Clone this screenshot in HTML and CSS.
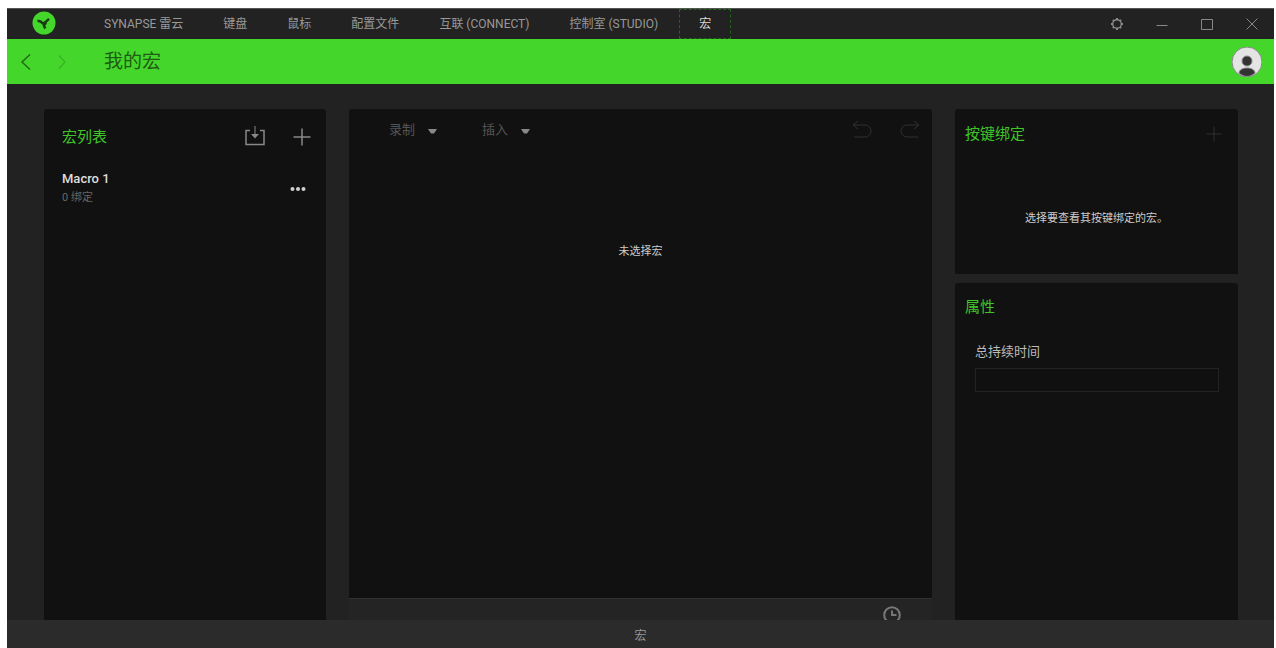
FILE: index.html
```html
<!DOCTYPE html>
<html lang="zh-CN">
<head>
<meta charset="utf-8">
<title>我的宏</title>
<link rel="stylesheet" href="styles.css">
</head>
<body>
<div class="window">
  <header class="titlebar">
    <svg class="logo" viewBox="0 0 24 24" aria-hidden="true">
      <circle cx="12" cy="12" r="11.5" fill="#45d62c"/>
      <path d="M5.500 9.800c2.500 0 4 1 6 3l5.500-5M11.500 12.500c.3 2 .6 3.200 1.800 5" fill="none" stroke="#173b12" stroke-width="2.400"/>
      <path d="M9 11.500l4.500-1 1.500 2-2.500 3z" fill="#173b12"/>
    </svg>
    <nav class="tabs">
      <a class="tab" href="#synapse">SYNAPSE 雷云</a>
      <a class="tab" href="#keyboard">键盘</a>
      <a class="tab" href="#mouse">鼠标</a>
      <a class="tab" href="#profiles">配置文件</a>
      <a class="tab" href="#connect">互联 (CONNECT)</a>
      <a class="tab" href="#studio">控制室 (STUDIO)</a>
      <a class="tab tab-active" href="#macro" aria-current="page">宏</a>
    </nav>
    <div class="controls">
      <button class="icon-button" aria-label="设置">
        <svg class="icon-small" viewBox="0 0 16 16"><circle cx="8" cy="8" r="4.300" stroke-width="1.400"/><path d="M8 2v2M8 12v2M2 8h2M12 8h2M3.900 3.900l1.200 1.200M10.900 10.900l1.200 1.200M12.100 3.900l-1.200 1.200M5.100 10.900l-1.200 1.200" stroke-width="2"/></svg>
      </button>
      <button class="icon-button" aria-label="最小化">
        <svg class="icon-small" viewBox="0 0 16 16"><path d="M2.500 9.500h11"/></svg>
      </button>
      <button class="icon-button" aria-label="最大化">
        <svg class="icon-small" viewBox="0 0 16 16"><path d="M2.500 3.500h11v10h-11z"/></svg>
      </button>
      <button class="icon-button" aria-label="关闭">
        <svg class="icon-small" viewBox="0 0 16 16"><path d="M2.500 2.500l11 11M13.500 2.500l-11 11"/></svg>
      </button>
    </div>
  </header>

  <div class="banner">
    <button class="icon-button" aria-label="后退">
      <svg class="icon-arrow" viewBox="0 0 16 20"><path d="M12 2.500L4 10l8 7.500" stroke="#1d6b12" stroke-width="1.500"/></svg>
    </button>
    <button class="icon-button" aria-label="前进">
      <svg class="icon-arrow" viewBox="0 0 16 20"><path d="M5 3.500l6 6.500-6 6.500" stroke="#37b423" stroke-width="1.300"/></svg>
    </button>
    <h1 class="page-title">我的宏</h1>
    <button class="icon-button avatar" aria-label="用户">
      <svg class="avatar-icon" viewBox="0 0 30 30">
        <circle cx="15" cy="15" r="15" fill="#e4e4e4"/>
        <circle cx="15" cy="14" r="5" fill="#333"/>
        <path d="M7 26c0-3 3.500-5 8-5s8 2 8 5c-2.500 2.400-5 3.400-8 3.400s-5.500-1-8-3.400z" fill="#333"/>
      </svg>
    </button>
  </div>

  <main class="workspace">
    <section class="card macro-list">
      <div class="list-head">
        <h2 class="card-title">宏列表</h2>
        <button class="icon-button" aria-label="导入">
          <svg class="icon-large" viewBox="0 0 22 22"><path d="M6 4.500H2v14h18v-14h-4" stroke-width="1.500"/><path d="M11 0v9"/><path d="M7 8h8l-4 4.500z" fill="#888" stroke="none"/></svg>
        </button>
        <button class="icon-button" aria-label="添加宏">
          <svg class="icon-large" viewBox="0 0 22 22"><path d="M11 2.500v17M2.500 11h17" stroke-width="1.500"/></svg>
        </button>
      </div>
      <div class="macro-row">
        <div class="macro-text">
          <span class="macro-name">Macro 1</span>
          <span class="macro-bound">0 绑定</span>
        </div>
        <button class="icon-button" aria-label="更多">
          <svg class="icon-small" viewBox="0 0 16 16"><g fill="#d0d0d0" stroke="none"><circle cx="2.500" cy="8" r="2"/><circle cx="8" cy="8" r="2"/><circle cx="13.500" cy="8" r="2"/></g></svg>
        </button>
      </div>
    </section>

    <section class="card editor">
      <div class="editor-head">
        <button class="menu-button">录制<svg class="caret" viewBox="0 0 9 6"><path d="M0 0h9L6 4.500H3z"/></svg></button>
        <button class="menu-button">插入<svg class="caret" viewBox="0 0 9 6"><path d="M0 0h9L6 4.500H3z"/></svg></button>
        <div class="history">
          <button class="icon-button" aria-label="撤销" disabled>
            <svg class="icon-large dim" viewBox="0 0 22 22"><path d="M7 2L2 6l5 4M2.500 6H14a6 6 0 0 1 0 12H3"/></svg>
          </button>
          <button class="icon-button" aria-label="重做" disabled>
            <svg class="icon-large dim" viewBox="0 0 22 22"><path d="M15 2l5 4-5 4M19.500 6H8a6 6 0 0 0 0 12h11"/></svg>
          </button>
        </div>
      </div>
      <p class="message editor-message">未选择宏</p>
      <div class="editor-foot">
        <button class="icon-button" aria-label="延迟">
          <svg class="icon-clock" viewBox="0 0 18 18"><circle cx="9" cy="9" r="7.800"/><path d="M9 4.500V9h4.500"/></svg>
        </button>
      </div>
    </section>

    <div class="side">
      <section class="card bindings">
        <div class="side-head">
          <h2 class="card-title">按键绑定</h2>
          <button class="icon-button" aria-label="添加绑定" disabled>
            <svg class="icon-plus dim" viewBox="0 0 18 18"><path d="M9 1.500v15M1.500 9h15"/></svg>
          </button>
        </div>
        <p class="message bindings-message">选择要查看其按键绑定的宏。</p>
      </section>
      <section class="card properties">
        <h2 class="card-title">属性</h2>
        <div class="field">
          <label class="field-label" for="duration">总持续时间</label>
          <input class="field-input" id="duration" type="text" readonly>
        </div>
      </section>
    </div>
  </main>

  <footer class="footer">宏</footer>
</div>
</body>
</html>
```

FILE: styles.css
```css
* {
  box-sizing: border-box;
}

body {
  margin: 0;
  background: #fff;
  color: #ccc;
  font-family: Roboto, "Noto Sans CJK SC", sans-serif;
  font-size: 12px;
  line-height: 16px;
}

h1, h2, p {
  margin: 0;
  font-weight: 400;
}

button {
  padding: 0;
  border: 0;
  background: none;
  color: inherit;
  font: inherit;
}

svg {
  display: block;
  fill: none;
}

.window {
  display: flex;
  flex-direction: column;
  height: 100vh;
  border: solid #fff;
  border-width: 8px 2px 0 7px;
  background: #222;
  overflow: hidden;
}

.titlebar {
  display: flex;
  flex: none;
  height: 31px;
  padding: 0 14px 0 25px;
  border-top: 1px solid #555;
}

.logo {
  width: 24px;
  height: 24px;
  margin-top: 2px;
}

.tabs {
  display: flex;
  flex: 1;
  gap: 2px;
  margin-left: 29px;
}

.tab {
  display: flex;
  align-items: center;
  padding: 0 19px;
  color: #999;
  text-decoration: none;
  white-space: nowrap;
}

.tab-active {
  border: 1px dashed #24631b;
  color: #ddd;
}

.controls {
  display: flex;
  align-items: center;
  gap: 29px;
}

.icon-button {
  flex: none;
  stroke: #888;
}

.icon-small {
  width: 16px;
  height: 16px;
}

.icon-large {
  width: 22px;
  height: 22px;
}

.icon-plus,
.icon-clock {
  width: 18px;
  height: 18px;
}

.icon-clock {
  stroke: #777;
  stroke-width: 2;
}

.dim {
  stroke: #303030;
}

.banner {
  display: flex;
  flex: none;
  align-items: center;
  gap: 20px;
  height: 45px;
  padding: 0 12px 0 11px;
  background: #45d62c;
}

.icon-arrow {
  width: 16px;
  height: 20px;
}

.page-title {
  flex: 1;
  margin-left: 14px;
  color: #1d5c13;
  font-size: 19px;
  line-height: 28px;
}

.avatar-icon {
  width: 30px;
  height: 30px;
}

.workspace {
  display: grid;
  flex: 1;
  grid-template-columns: 282px 1fr 283px;
  gap: 23px;
  min-height: 0;
  padding: 25px 36px 0 37px;
}

.card {
  border-radius: 3px 3px 0 0;
  background: #111;
}

.card-title {
  flex: 1;
  color: #3fc528;
  font-size: 15px;
  line-height: 20px;
}

.list-head {
  display: flex;
  align-items: center;
  gap: 25px;
  padding: 17px 13px 0 18px;
}

.macro-row {
  display: flex;
  align-items: center;
  padding: 23px 20px 0 18px;
}

.macro-text {
  display: flex;
  flex: 1;
  flex-direction: column;
  gap: 3px;
}

.macro-name {
  color: #ddd;
  font-size: 13px;
  font-weight: 500;
}

.macro-bound {
  color: #666;
  font-size: 11px;
}

.editor {
  display: flex;
  flex-direction: column;
  min-width: 0;
}

.editor-head {
  display: flex;
  gap: 45px;
  align-items: center;
  padding: 10px 11px 0 40px;
}

.menu-button {
  display: flex;
  gap: 13px;
  align-items: center;
  color: #555;
  font-size: 13px;
}

.caret {
  width: 9px;
  height: 6px;
  margin-top: 4px;
  fill: #888;
}

.history {
  display: flex;
  gap: 26px;
  margin-left: auto;
}

.message {
  color: #ccc;
  font-size: 11px;
  text-align: center;
}

.editor-message {
  flex: 1;
  padding-top: 103px;
}

.editor-foot {
  display: flex;
  flex: none;
  justify-content: flex-end;
  height: 22px;
  padding: 7px 31px 0 0;
  border-top: 1px solid #303030;
  background: #242424;
  overflow: hidden;
}

.side {
  display: flex;
  flex-direction: column;
  gap: 9px;
}

.bindings {
  flex: none;
  padding-bottom: 47px;
}

.side-head {
  display: flex;
  align-items: center;
  padding: 15px 15px 0 10px;
}

.bindings-message {
  padding-top: 67px;
}

.properties {
  flex: 1;
  padding: 14px 19px 0 10px;
}

.field {
  display: flex;
  flex-direction: column;
  gap: 8px;
  padding: 27px 0 0 10px;
}

.field-label {
  color: #bbb;
  font-size: 13px;
}

.field-input {
  width: 100%;
  height: 24px;
  border: 1px solid #222;
  background: #101010;
  color: #ccc;
}

.footer {
  flex: none;
  height: 28px;
  padding-top: 8px;
  background: #2b2b2b;
  color: #999;
  text-align: center;
}
```
